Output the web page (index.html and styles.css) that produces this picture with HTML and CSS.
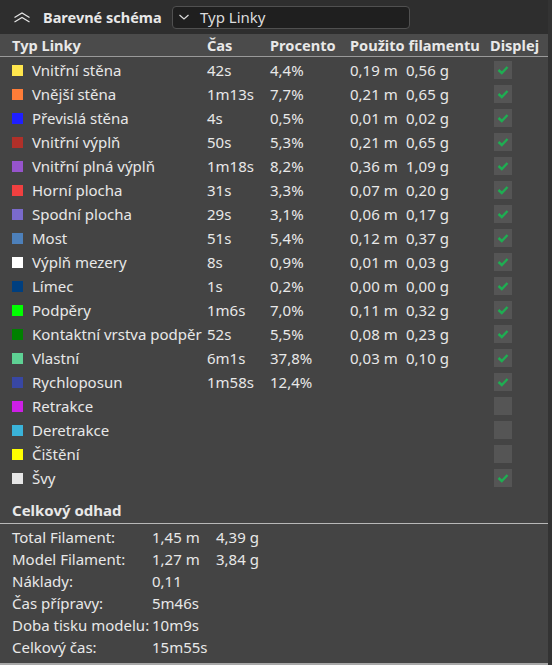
FILE: index.html
```html
<!DOCTYPE html>
<html lang="cs">
<head>
  <meta charset="UTF-8">
  <meta name="viewport" content="width=device-width, initial-scale=1.0">
  <title>Barevné schéma</title>
  <link rel="stylesheet" href="styles.css">
</head>
<body>
  <div class="panel">
    <div class="topbar">
      <svg class="collapse" width="18" height="11" viewBox="0 0 18 11">
        <path d="M1.5 5.5 L9 1 L16.5 5.5 M1.5 10 L9 5.5 L16.5 10" fill="none" stroke="#e6e6e6" stroke-width="1.2"/>
      </svg>
      <span class="title">Barevné schéma</span>
      <div class="combo">
        <svg width="12" height="8" viewBox="0 0 12 8">
          <path d="M1.5 2 L6 6 L10.5 2" fill="none" stroke="#dcdcdc" stroke-width="1.2"/>
        </svg>
        <span>Typ Linky</span>
      </div>
    </div>

    <div class="row head">
      <span class="name">Typ Linky</span>
      <span>Čas</span>
      <span>Procento</span>
      <span>Použito filamentu</span>
      <span>Displej</span>
    </div>

    <div class="lines" id="lines"></div>

    <div class="total-title">Celkový odhad</div>
    <div class="totals">
      <div class="trow"><span>Total Filament:</span><span>1,45 m</span><span>4,39 g</span></div>
      <div class="trow"><span>Model Filament:</span><span>1,27 m</span><span>3,84 g</span></div>
      <div class="trow"><span>Náklady:</span><span>0,11</span></div>
      <div class="trow"><span>Čas přípravy:</span><span>5m46s</span></div>
      <div class="trow"><span>Doba tisku modelu:</span><span>10m9s</span></div>
      <div class="trow"><span>Celkový čas:</span><span>15m55s</span></div>
    </div>
  </div>

  <script>
    // typ linky, barva, čas, procento, metry, gramy, zobrazeno
    const lines = [
      ['Vnitřní stěna', '#ffe64d', '42s', '4,4%', '0,19 m', '0,56 g', true],
      ['Vnější stěna', '#ff7d38', '1m13s', '7,7%', '0,21 m', '0,65 g', true],
      ['Převislá stěna', '#1f1fff', '4s', '0,5%', '0,01 m', '0,02 g', true],
      ['Vnitřní výplň', '#b03029', '50s', '5,3%', '0,21 m', '0,65 g', true],
      ['Vnitřní plná výplň', '#9654cc', '1m18s', '8,2%', '0,36 m', '1,09 g', true],
      ['Horní plocha', '#f04040', '31s', '3,3%', '0,07 m', '0,20 g', true],
      ['Spodní plocha', '#7a6acc', '29s', '3,1%', '0,06 m', '0,17 g', true],
      ['Most', '#4d80ba', '51s', '5,4%', '0,12 m', '0,37 g', true],
      ['Výplň mezery', '#ffffff', '8s', '0,9%', '0,01 m', '0,03 g', true],
      ['Límec', '#003f7f', '1s', '0,2%', '0,00 m', '0,00 g', true],
      ['Podpěry', '#00ff00', '1m6s', '7,0%', '0,11 m', '0,32 g', true],
      ['Kontaktní vrstva podpěr', '#008000', '52s', '5,5%', '0,08 m', '0,23 g', true],
      ['Vlastní', '#5ed194', '6m1s', '37,8%', '0,03 m', '0,10 g', true],
      ['Rychloposun', '#3847a3', '1m58s', '12,4%', '', '', true],
      ['Retrakce', '#cd1fe6', '', '', '', '', false],
      ['Deretrakce', '#3ab3d9', '', '', '', '', false],
      ['Čištění', '#ffff00', '', '', '', '', false],
      ['Švy', '#e6e6e6', '', '', '', '', true]
    ];

    const check = '<svg width="12" height="10" viewBox="0 0 12 10"><path d="M1.5 5 L4.8 8 L10.5 2" fill="none" stroke="#1fae52" stroke-width="2.4"/></svg>';

    const list = document.getElementById('lines');
    lines.forEach(([name, color, time, pct, m, g, on]) => {
      const row = document.createElement('div');
      row.className = 'row';
      row.innerHTML =
        `<span class="name"><i class="swatch" style="background:${color}"></i>${name}</span>` +
        `<span>${time}</span><span>${pct}</span>` +
        `<span class="fil"><span class="m">${m}</span><span>${g}</span></span>` +
        `<span><span class="box">${on ? check : ''}</span></span>`;
      list.appendChild(row);
    });
  </script>
</body>
</html>
```

FILE: styles.css
```css
html, body {
  margin: 0;
  padding: 0;
  background: #333333;
}

body {
  font-family: "Noto Sans", "Open Sans", sans-serif;
  font-size: 15px;
  color: #e8e8e8;
}

.panel {
  width: 548px;
  height: 663px;
  background: #444444;
  border-bottom: 2px solid #a8a8a8;
  overflow: hidden;
}

.topbar {
  height: 34px;
  background: #2e2e2e;
  display: flex;
  align-items: center;
  padding-left: 13px;
  box-sizing: border-box;
}

.collapse {
  margin-right: 12px;
}

.title {
  font-weight: 700;
  font-size: 14.5px;
  width: 129px;
}

.combo {
  width: 238px;
  height: 23px;
  box-sizing: border-box;
  background: #1f1f1f;
  border: 1px solid #505050;
  border-radius: 4px;
  display: flex;
  align-items: center;
  padding-left: 5px;
  font-size: 15px;
  color: #dcdcdc;
}

.combo svg {
  margin-right: 10px;
}

.row {
  display: grid;
  grid-template-columns: 195px 63px 80px 140px 1fr;
  height: 24px;
  align-items: center;
  padding-left: 12px;
  white-space: nowrap;
}

.row.head {
  height: 22px;
  background: #4b4b4b;
  font-weight: 700;
  font-size: 14.6px;
  border-bottom: 1px solid #9a9a9a;
  margin-bottom: 1px;
}

.lines {
  height: 432px;
  margin-bottom: 8px;
}

.name {
  display: flex;
  align-items: center;
}

.swatch {
  width: 11px;
  height: 11px;
  margin-right: 9px;
  flex: none;
}

.fil .m {
  display: inline-block;
  width: 56px;
}

.box {
  display: flex;
  width: 18px;
  height: 18px;
  margin-left: 4px;
  background: #555555;
  align-items: center;
  justify-content: center;
}

.total-title {
  height: 25px;
  line-height: 24px;
  padding-left: 12px;
  font-weight: 700;
  border-bottom: 1px solid #b8b8b8;
}

.totals {
  padding: 2px 0 0 12px;
}

.trow {
  display: grid;
  grid-template-columns: 140px 64px auto;
  height: 22px;
  align-items: center;
}
```
